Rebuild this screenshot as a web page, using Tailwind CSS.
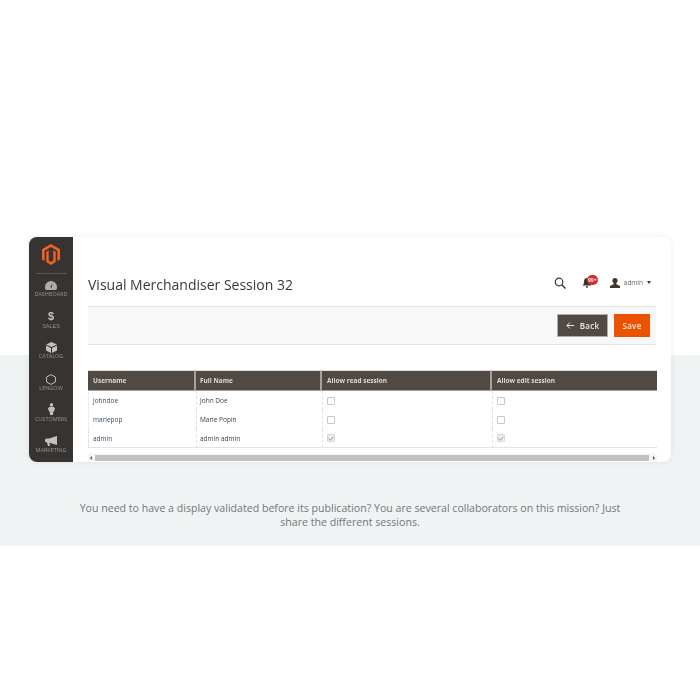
<!DOCTYPE html>
<html>
  <head>
    <meta charset="utf-8" />
    <title>Visual Merchandiser Session</title>
    <script src="https://cdn.jsdelivr.net/npm/@tailwindcss/browser@4"></script>
  </head>
  <body class="bg-white font-['Open_Sans',sans-serif] overflow-hidden">
    <div class="h-[700px] w-[700px] pt-[237px]">
      <!-- card -->
      <div class="relative z-10 mx-[29px] flex h-[225px] w-[642px] rounded-[8px] bg-white shadow-[0_0_6px_rgba(0,0,0,0.07)] will-change-transform">
        <!-- sidebar -->
        <div class="flex w-[44px] shrink-0 flex-col items-center overflow-hidden rounded-l-[8px] bg-[#373330]">
          <svg class="mt-[7px] shrink-0" width="18" height="21" viewBox="0 0 18 21">
            <path fill="#f26322" d="M9 0 0 5.200v10.400l2.600 1.500V6.700L9 3l6.400 3.700v10.400l2.600-1.500V5.200z" />
            <path fill="#f26322" d="M4.300 7.700 6.700 6.300V16.600L9 18l2.300-1.400V6.300l2.400 1.400v10.400L9 21l-4.700-2.900z" />
          </svg>
          <div class="mt-[8px] mb-[6px] h-px w-[31px] shrink-0 bg-[#5a5653]"></div>

          <div class="flex h-[31.200px] w-full shrink-0 flex-col items-center">
            <div class="flex h-[11px] items-center">
              <svg width="12" height="9" viewBox="0 0 12 9">
                <path fill="#b0aca8" d="M6 0a6 6 0 0 0-6 6c0 1.200.3 2.200.8 3h10.400c.5-.8.8-1.800.8-3a6 6 0 0 0-6-6zm.800 6.500H5.200L7.500 2z" />
              </svg>
            </div>
            <span class="text-[5.500px] leading-[7px] text-[#96928e]">DASHBOARD</span>
          </div>
          <div class="flex h-[31.200px] w-full shrink-0 flex-col items-center">
            <div class="flex h-[11px] items-center">
              <span class="font-['Liberation_Sans',sans-serif] text-[11px] leading-[11px] font-bold text-[#c4c0bc]">$</span>
            </div>
            <span class="mt-[1px] font-['Liberation_Sans',sans-serif] text-[5.500px] leading-[6px] text-[#96928e]">SALES</span>
          </div>
          <div class="flex h-[31.200px] w-full shrink-0 flex-col items-center">
            <div class="flex h-[11px] items-center">
              <svg width="11" height="11" viewBox="0 0 11 11">
                <path fill="#c4c0bc" d="M5.500 0 0 2.500 5.500 5 11 2.500zM0 3.500v5L5 11V6zM11 3.500v5L6 11V6z" />
              </svg>
            </div>
            <span class="text-[5.500px] leading-[7px] text-[#96928e]">CATALOG</span>
          </div>
          <div class="flex h-[31.200px] w-full shrink-0 flex-col items-center">
            <div class="flex h-[11px] items-center">
              <svg width="10" height="11" viewBox="0 0 10 11">
                <path fill="none" stroke="#c4c0bc" stroke-width="1" d="M5 .6 9.400 3v5L5 10.400.6 8V3z" />
              </svg>
            </div>
            <span class="text-[5.500px] leading-[7px] text-[#96928e]">LENGOW</span>
          </div>
          <div class="flex h-[31.200px] w-full shrink-0 flex-col items-center">
            <div class="flex h-[11px] items-center">
              <svg class="mt-[-3px]" width="7" height="12" viewBox="0 0 7 12">
                <circle cx="3.500" cy="1.700" r="1.700" fill="#c4c0bc" />
                <path fill="#c4c0bc" d="M1.500 3.800h4L7 5.500 6 8.500H5.200L5 12H2l-.2-3.500H1L0 5.500z" />
              </svg>
            </div>
            <span class="text-[5.500px] leading-[7px] text-[#96928e]">CUSTOMERS</span>
          </div>
          <div class="flex h-[31.200px] w-full shrink-0 flex-col items-center">
            <div class="flex h-[11px] items-center">
              <svg width="12" height="10" viewBox="0 0 12 10">
                <path fill="#c4c0bc" d="M12 0 4 2.500H1.500L0 3.500v2l1.500 1H2L3 10h2L4.300 6.700 12 9z" />
              </svg>
            </div>
            <span class="text-[5.500px] leading-[7px] text-[#96928e]">MARKETING</span>
          </div>
        </div>

        <!-- main -->
        <div class="flex min-w-0 flex-1 flex-col px-[15px]">
          <div class="flex h-[69px] items-center justify-between">
            <h1 class="mt-[26px] pt-px text-[14px] leading-[20px] text-[#41362f]">Visual Merchandiser Session 32</h1>
            <div class="mt-[22px] flex items-center">
              <svg width="12" height="12" viewBox="0 0 12 12">
                <circle cx="5" cy="5" r="3.800" fill="none" stroke="#41362f" stroke-width="1.200" />
                <path stroke="#41362f" stroke-width="1.500" d="M7.800 7.800 11.500 11.500" />
              </svg>
              <div class="relative ml-[16px] h-[12px] w-[16px]">
                <svg class="absolute top-[1px] left-0" width="10" height="10" viewBox="0 0 10 10">
                  <path fill="#41362f" d="M5 0C3 0 2 1.500 2 3.500 2 5.500 1.500 6.500.5 7.500h9C8.500 6.500 8 5.500 8 3.500 8 1.500 7 0 5 0zM3.800 8.300h2.400C6 9.400 5.600 10 5 10s-1-.6-1.200-1.700z" />
                </svg>
                <span class="absolute top-[-2px] left-[5px] h-[10px] min-w-[11px] rounded-full bg-[#e22626] text-center text-[5px] leading-[10px] font-bold text-white">99+</span>
              </div>
              <svg class="ml-[12px]" width="10" height="10" viewBox="0 0 10 10">
                <circle cx="5" cy="2.600" r="2.600" fill="#41362f" />
                <path fill="#41362f" d="M3.800 4.500h2.400L6.500 6.200 10 8v2H0V8l3.500-1.800z" />
              </svg>
              <span class="ml-[4px] text-[6.500px] leading-[10px] text-[#6b625c]">admin</span>
              <span class="ml-[4px] h-0 w-0 border-x-[2.500px] border-t-[3px] border-x-transparent border-t-[#41362f]"></span>
              <span class="w-[5px]"></span>
            </div>
          </div>

          <!-- action bar -->
          <div class="flex h-[39px] items-center justify-end border-y border-[#e3e3e3] bg-[#f8f8f8] pr-[6px]">
            <button class="flex h-[23px] w-[51px] items-center justify-center gap-[6px] border border-[#adadad] bg-[#514943] text-[8px] font-semibold tracking-[0.3px] text-[#e8e8e8]">
              <svg width="8" height="7" viewBox="0 0 8 7">
                <path fill="none" stroke="#e8e8e8" stroke-width="1" d="M8 3.500H1M3.800.5 .9 3.500 3.800 6.500" />
              </svg>
              Back
            </button>
            <button class="ml-[6px] flex h-[23px] w-[36px] items-center justify-center bg-[#eb5202] text-[8px] font-semibold tracking-[0.3px] text-[#fbe6d8]">Save</button>
          </div>

          <!-- table -->
          <table class="mt-[25px] w-[569px] table-fixed border-separate border-spacing-0 text-[6.500px] text-[#41362f]">
            <thead>
              <tr class="h-[21px] bg-[#514943] text-left text-[#dedbd8]">
                <th class="w-[108px] border-t border-r-2 border-b border-t-[#dddddd] border-r-[#a8a29c] border-b-[#a8a29c] pl-[5px] font-bold">Username</th>
                <th class="w-[126px] border-t border-r-2 border-b border-t-[#dddddd] border-r-[#a8a29c] border-b-[#a8a29c] pl-[4px] font-bold">Full Name</th>
                <th class="w-[170px] border-t border-r-2 border-b border-t-[#dddddd] border-r-[#a8a29c] border-b-[#a8a29c] pl-[5px] font-bold">Allow read session</th>
                <th class="border-t border-b border-t-[#dddddd] border-b-[#a8a29c] pl-[5px] font-bold">Allow edit session</th>
              </tr>
            </thead>
            <tbody>
              <tr class="h-[19px]">
                <td class="border-l border-[#eeeeee] pl-[4px] text-[#3c4d5c]">johndoe</td>
                <td class="border-l border-[#e2e2e2] pl-[3px] text-[#4a3a30] [border-left-style:dashed]">John Doe</td>
                <td class="border-l border-[#e2e2e2] pl-[4px] [border-left-style:dashed]"><div class="h-[8px] w-[8px] rounded-[1px] border border-[#c8c8c8] bg-white"></div></td>
                <td class="border-l border-[#e2e2e2] pl-[4px] [border-left-style:dashed]"><div class="h-[8px] w-[8px] rounded-[1px] border border-[#c8c8c8] bg-white"></div></td>
              </tr>
              <tr class="h-[19px]">
                <td class="border-l border-[#eeeeee] pl-[4px] text-[#3c4d5c]">mariepop</td>
                <td class="border-l border-[#e2e2e2] pl-[3px] text-[#4a3a30] [border-left-style:dashed]">Marie Popin</td>
                <td class="border-l border-[#e2e2e2] pl-[4px] [border-left-style:dashed]"><div class="h-[8px] w-[8px] rounded-[1px] border border-[#c8c8c8] bg-white"></div></td>
                <td class="border-l border-[#e2e2e2] pl-[4px] [border-left-style:dashed]"><div class="h-[8px] w-[8px] rounded-[1px] border border-[#c8c8c8] bg-white"></div></td>
              </tr>
              <tr class="h-[19px]">
                <td class="border-b border-l border-[#e3e3e3] pt-[1px] pl-[4px] text-[#3c4d5c]">admin</td>
                <td class="border-b border-l border-b-[#e3e3e3] border-l-[#e2e2e2] pt-[1px] pl-[3px] text-[#4a3a30] [border-left-style:dashed]">admin admin</td>
                <td class="border-b border-l border-b-[#e3e3e3] border-l-[#e2e2e2] pl-[4px] [border-left-style:dashed]">
                  <div class="flex h-[8px] w-[8px] items-center justify-center rounded-[1px] border border-[#d6d6d6] bg-[#eeeeee]">
                    <svg width="6" height="5" viewBox="0 0 6 5"><path fill="none" stroke="#9a9a9a" stroke-width="1" d="M.6 2.500 2.300 4.200 5.400.8" /></svg>
                  </div>
                </td>
                <td class="border-b border-l border-b-[#e3e3e3] border-l-[#e2e2e2] pl-[4px] [border-left-style:dashed]">
                  <div class="flex h-[8px] w-[8px] items-center justify-center rounded-[1px] border border-[#d6d6d6] bg-[#eeeeee]">
                    <svg width="6" height="5" viewBox="0 0 6 5"><path fill="none" stroke="#9a9a9a" stroke-width="1" d="M.6 2.500 2.300 4.200 5.400.8" /></svg>
                  </div>
                </td>
              </tr>
            </tbody>
          </table>

          <!-- scrollbar -->
          <div class="mt-[6px] flex h-[7px] w-[569px] items-center bg-[#f4f4f4]">
            <span class="ml-[2px] h-0 w-0 border-y-[2px] border-r-[2px] border-y-transparent border-r-[#555555]"></span>
            <div class="ml-[3px] h-[6px] w-[554px] bg-[#c1c1c1]"></div>
            <span class="ml-[4px] h-0 w-0 border-y-[2px] border-l-[2px] border-y-transparent border-l-[#555555]"></span>
          </div>
        </div>
      </div>

      <!-- band behind the card -->
      <div class="mt-[-107px] h-[191px] bg-[#f0f3f4] pt-[146px] text-center text-[10.600px] leading-[14px] text-[#737679]">
        <p class="mx-auto w-[560px]">You need to have a display validated before its publication? You are several collaborators on this mission? Just share the different sessions.</p>
      </div>
    </div>
  </body>
</html>
